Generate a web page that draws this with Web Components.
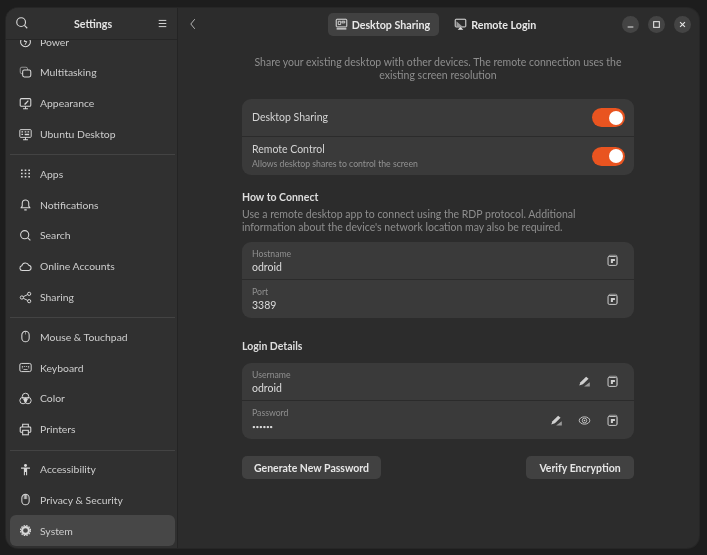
<!DOCTYPE html>
<html>
<head>
<meta charset="utf-8">
<title>Settings</title>
<style>
  html, body { margin: 0; height: 100%; background: #1d1d1d; overflow: hidden; }
  body { font-family: Lato, "Noto Sans", sans-serif; font-size: 10.500px; color: #d6d6d6; }
</style>
</head>
<body>
<settings-window></settings-window>

<script>
// every icon is 16x16 and drawn with currentColor
const ICONS = {
  search: '<circle cx="7" cy="7" r="5" fill="none" stroke="currentColor" stroke-width="1.3"/><path d="M10.8 10.8l3.2 3.2" stroke="currentColor" stroke-width="1.3"/>',
  menu: '<path d="M2.5 3.5h11M2.5 8h11M2.5 12.5h11" stroke="currentColor" stroke-width="1.4"/>',
  back: '<path d="M10 2.5L5.5 8l4.5 5.5" fill="none" stroke="currentColor" stroke-width="1"/>',
  power: '<path d="M5 3.2a6 6 0 1 0 6 0" fill="none" stroke="currentColor" stroke-width="1.3"/><path d="M8.6 3L6.5 8h3l-2 4" fill="none" stroke="currentColor" stroke-width="1.2"/>',
  multitasking: '<rect x="1.5" y="1.5" width="9" height="8" rx="2" fill="none" stroke="currentColor" stroke-width="1" opacity=".7"/><rect x="4.5" y="5" width="10" height="8.5" rx="2" fill="#303030" stroke="currentColor" stroke-width="1.3"/>',
  appearance: '<rect x="1.5" y="2" width="13" height="9.5" rx="1.5" fill="none" stroke="currentColor" stroke-width="1.3"/><path d="M5 14.5h6M8 11.5v3" stroke="currentColor" stroke-width="1.3"/><path d="M6 9l5-5 1 1-4 4.5z" fill="currentColor"/>',
  ubuntu: '<rect x="1" y="2" width="14" height="9.5" rx="1" fill="none" stroke="currentColor" stroke-width="1.2"/><path d="M5 14.5h6M8 11.5v3" stroke="currentColor" stroke-width="1.3"/><path d="M3 4h2v1.5H3zM3 7h2v1.5H3zM7 4h2v1.5H7zM10.500 4h2v1.5h-2zM7 7h5.500v2H7z" fill="currentColor"/>',
  apps: '<path d="M2.500 3h2v2h-2zM7 3h2v2H7zM11.500 3h2v2h-2zM2.500 7h2v2h-2zM7 7h2v2H7zM11.500 7h2v2h-2zM2.500 11h2v2h-2zM7 11h2v2H7zM11.500 11h2v2h-2z" fill="currentColor"/>',
  bell: '<path d="M2.500 12h11l-1.500-2V6.500a4 4 0 0 0-8 0V10z" fill="none" stroke="currentColor" stroke-width="1.3" stroke-linejoin="round"/><path d="M6.500 14.500h3" stroke="currentColor" stroke-width="1.5"/>',
  cloud: '<path d="M4 13a3 3 0 0 1-.6-5.900A4.500 4.500 0 0 1 12 6.500 3.300 3.300 0 0 1 12.200 13z" fill="none" stroke="currentColor" stroke-width="1.3"/>',
  share: '<circle cx="3.500" cy="8" r="2" fill="none" stroke="currentColor" stroke-width="1.2"/><circle cx="12.500" cy="3.500" r="2" fill="none" stroke="currentColor" stroke-width="1.2"/><circle cx="12.500" cy="12.500" r="2" fill="none" stroke="currentColor" stroke-width="1.2"/><path d="M5.300 7l5.400-2.600M5.300 9l5.400 2.600" stroke="currentColor" stroke-width="1.2"/>',
  mouse: '<rect x="3.500" y="1.500" width="9" height="13" rx="4.500" fill="none" stroke="currentColor" stroke-width="1.3"/><path d="M8 1.500v4" stroke="currentColor" stroke-width="1" opacity=".7"/>',
  keyboard: '<rect x="1" y="3" width="14" height="10" rx="2" fill="none" stroke="currentColor" stroke-width="1.2"/><path d="M3.500 6h1.500v1H3.500zM6 6h1.500v1H6zM8.500 6H10v1H8.500zM11 6h1.500v1H11zM3.500 8h1.500v1H3.500zM11 8h1.500v1H11zM5.500 10h5v1h-5z" fill="currentColor"/>',
  color: '<circle cx="8" cy="5.500" r="4" fill="none" stroke="currentColor" stroke-width="1.200"/><circle cx="5" cy="10.500" r="4" fill="none" stroke="currentColor" stroke-width="1.200"/><circle cx="11" cy="10.500" r="4" fill="none" stroke="currentColor" stroke-width="1.200"/><path d="M8 6l2.500 3-1 3h-3l-1-3z" fill="currentColor"/>',
  printer: '<path d="M4.500 5V1.500h7V5" fill="none" stroke="currentColor" stroke-width="1.300"/><path d="M4 11.500H2.500a1 1 0 0 1-1-1V6a1 1 0 0 1 1-1h11a1 1 0 0 1 1 1v4.500a1 1 0 0 1-1 1H12" fill="none" stroke="currentColor" stroke-width="1.300"/><rect x="4.500" y="9" width="7" height="5.500" fill="none" stroke="currentColor" stroke-width="1.300"/>',
  access: '<circle cx="8" cy="3" r="1.800" fill="currentColor"/><path d="M2.500 5.500h11v1.500H10v8H8.700v-4H7.300v4H6V7H2.500z" fill="currentColor"/>',
  privacy: '<rect x="3.500" y="1.500" width="9" height="13" rx="4.500" fill="none" stroke="currentColor" stroke-width="1.300"/><path d="M6.500 2v5.500M8 1.500v6M9.500 2v5.500" stroke="currentColor" stroke-width="1"/>',
  system: '<circle cx="8" cy="8" r="4.200" fill="none" stroke="currentColor" stroke-width="2.600"/><circle cx="8" cy="8" r="6.200" fill="none" stroke="currentColor" stroke-width="1.300" stroke-dasharray="2 1.250"/>',
  desktop: '<rect x="1.500" y="1.500" width="13" height="9.500" rx="1" fill="none" stroke="currentColor" stroke-width="1.200"/><path d="M4 4h3v4H4zM8.500 4H12v2H8.500z" fill="none" stroke="currentColor" stroke-width="1"/><path d="M2 13.500h12" stroke="currentColor" stroke-width="1.500"/>',
  remote: '<rect x="1.500" y="1.500" width="13" height="9.500" rx="1" fill="none" stroke="currentColor" stroke-width="1.200"/><path d="M4.500 14.500h7L8 11z" fill="currentColor"/><path d="M3 4l7 6H3z" fill="currentColor" opacity=".6"/>',
  copy: '<rect x="3.500" y="1.500" width="10" height="12" rx="1.500" fill="none" stroke="currentColor" stroke-width="1" opacity=".7"/><rect x="2.500" y="3" width="11" height="11" rx="1.500" fill="#3a3a3a" stroke="currentColor" stroke-width="1.200"/><path d="M6 6h5v2.500H8.500V11H6z" fill="currentColor"/>',
  edit: '<path d="M1.500 13l1.500-4 7-7 3 2.500-7 7z" fill="currentColor"/><path d="M7.500 14h7V9z" fill="currentColor" opacity=".65"/>',
  eye: '<ellipse cx="8" cy="8" rx="6.500" ry="4.500" fill="none" stroke="currentColor" stroke-width="1.100"/><circle cx="8" cy="8" r="2.800" fill="none" stroke="currentColor" stroke-width="1"/><circle cx="8" cy="8" r="1" fill="currentColor"/>',
  minimize: '<path d="M4.500 11h7" stroke="currentColor" stroke-width="1.300"/>',
  maximize: '<rect x="4.500" y="4.500" width="7" height="7" fill="none" stroke="currentColor" stroke-width="1.300"/>',
  close: '<path d="M5 5l6 6M11 5l-6 6" stroke="currentColor" stroke-width="1.400"/>'
};

class XIcon extends HTMLElement {
  connectedCallback() {
    const size = this.getAttribute('size') || 16;
    this.attachShadow({ mode: 'open' }).innerHTML = `
      <style>
        :host { display: inline-flex; flex: none; width: ${size}px; height: ${size}px; }
        svg { display: block; width: 100%; height: 100%; }
      </style>
      <svg viewBox="0 0 16 16">${ICONS[this.getAttribute('name')] || ''}</svg>`;
  }
}
customElements.define('x-icon', XIcon);

class SideRow extends HTMLElement {
  connectedCallback() {
    const active = this.hasAttribute('active');
    this.attachShadow({ mode: 'open' }).innerHTML = `
      <style>
        :host {
          display: flex; align-items: center; gap: 8px; flex: none;
          height: 30.800px; margin: 0 2px 0 4px; padding: 0 9px;
          border-radius: 6px; color: #cdcdcd; font-size: 10.400px;
          ${active ? 'background: #474747;' : ''}
        }
        x-icon { color: #d8d8d8; }
      </style>
      <x-icon name="${this.getAttribute('icon')}" size="13"></x-icon>
      <span><slot></slot></span>`;
  }
}
customElements.define('side-row', SideRow);

class SideBar extends HTMLElement {
  constructor() {
    super();
    this.shadowDOM = this.attachShadow({ mode: 'open' });
    this.shadowDOM.innerHTML = `
      <style>
        :host {
          display: flex; flex-direction: column; flex: none;
          width: 171px; background: #303030; overflow: hidden;
          border-right: 1px solid #242424;
        }
        header {
          display: flex; align-items: center; justify-content: space-between;
          flex: none; height: 32px; padding: 0 9px 1px 9px; box-sizing: border-box;
          color: #e4e4e4; font-weight: 700; font-size: 10.700px;
          border-bottom: 1px solid #262626; position: relative; z-index: 1; background: #303030;
        }
        .list { flex: 1; min-height: 0; overflow: hidden; padding-bottom: 2px; display: flex; flex-direction: column; justify-content: flex-end; }
        hr { flex: none; border: 0; height: 1px; background: #434343; margin: 5px 2px 3px 4px; }
        header x-icon { color: #d8d8d8; }
      </style>
      <header>
        <x-icon name="search" size="14"></x-icon>
        <span>Settings</span>
        <x-icon name="menu" size="11"></x-icon>
      </header>
      <div class="list">
        <side-row icon="power">Power</side-row>
        <side-row icon="multitasking">Multitasking</side-row>
        <side-row icon="appearance">Appearance</side-row>
        <side-row icon="ubuntu">Ubuntu Desktop</side-row>
        <hr>
        <side-row icon="apps">Apps</side-row>
        <side-row icon="bell">Notifications</side-row>
        <side-row icon="search">Search</side-row>
        <side-row icon="cloud">Online Accounts</side-row>
        <side-row icon="share">Sharing</side-row>
        <hr>
        <side-row icon="mouse">Mouse &amp; Touchpad</side-row>
        <side-row icon="keyboard">Keyboard</side-row>
        <side-row icon="color">Color</side-row>
        <side-row icon="printer">Printers</side-row>
        <hr>
        <side-row icon="access">Accessibility</side-row>
        <side-row icon="privacy">Privacy &amp; Security</side-row>
        <side-row icon="system" active>System</side-row>
      </div>`;
  }
}
customElements.define('side-bar', SideBar);

class ViewTab extends HTMLElement {
  connectedCallback() {
    const active = this.hasAttribute('active');
    this.attachShadow({ mode: 'open' }).innerHTML = `
      <style>
        :host {
          display: flex; align-items: center; gap: 4px;
          height: 23px; padding: 0 9px 0 7px; border-radius: 5px;
          font-weight: 700; font-size: 10.700px; color: #e8e8e8;
          ${active ? 'background: #414141;' : ''}
        }
      </style>
      <x-icon name="${this.getAttribute('icon')}" size="13"></x-icon>
      <span><slot></slot></span>`;
  }
}
customElements.define('view-tab', ViewTab);

class WinButton extends HTMLElement {
  connectedCallback() {
    this.attachShadow({ mode: 'open' }).innerHTML = `
      <style>
        :host {
          display: flex; align-items: center; justify-content: center;
          width: 17px; height: 17px; border-radius: 50%; background: #444444; color: #e6e6e6;
        }
      </style>
      <x-icon name="${this.getAttribute('icon')}" size="13"></x-icon>`;
  }
}
customElements.define('win-button', WinButton);

class TopBar extends HTMLElement {
  constructor() {
    super();
    this.attachShadow({ mode: 'open' }).innerHTML = `
      <style>
        :host {
          display: grid; grid-template-columns: 1fr auto 1fr; align-items: center;
          flex: none; height: 37px; padding: 0 7px 5px 8px; box-sizing: border-box;
        }
        .back { color: #c6c6c6; }
        .tabs { display: flex; gap: 8px; margin-left: -4px; }
        .ctl { display: flex; justify-content: flex-end; gap: 9px; }
      </style>
      <x-icon class="back" name="back" size="14"></x-icon>
      <div class="tabs">
        <view-tab icon="desktop" active>Desktop Sharing</view-tab>
        <view-tab icon="remote">Remote Login</view-tab>
      </div>
      <div class="ctl">
        <win-button icon="minimize"></win-button>
        <win-button icon="maximize"></win-button>
        <win-button icon="close"></win-button>
      </div>`;
  }
}
customElements.define('top-bar', TopBar);

class ToggleSwitch extends HTMLElement {
  constructor() {
    super();
    this.attachShadow({ mode: 'open' }).innerHTML = `
      <style>
        :host {
          display: flex; align-items: center; justify-content: flex-end; flex: none;
          width: 33px; height: 19px; padding: 0 2px; box-sizing: border-box;
          border-radius: 10px; background: #e95420;
        }
        i { display: block; width: 14px; height: 14px; border-radius: 50%; background: #fff; }
      </style>
      <i></i>`;
  }
}
customElements.define('toggle-switch', ToggleSwitch);

class ListCard extends HTMLElement {
  constructor() {
    super();
    this.attachShadow({ mode: 'open' }).innerHTML = `
      <style>
        :host { display: block; background: #3a3a3a; border-radius: 9px; overflow: hidden; }
        ::slotted(*:not(:last-child)) { border-bottom: 1px solid #2b2b2b; }
      </style>
      <slot></slot>`;
  }
}
customElements.define('list-card', ListCard);

// one line of a card: title (optionally over a value or subtitle) and trailing controls
class CardRow extends HTMLElement {
  connectedCallback() {
    const label = this.getAttribute('label');
    const value = this.getAttribute('value');
    const title = this.getAttribute('title-text');
    const sub = this.getAttribute('sub');
    const icons = (this.getAttribute('icons') || '').split(' ').filter(Boolean);
    this.attachShadow({ mode: 'open' }).innerHTML = `
      <style>
        :host {
          display: flex; align-items: center; justify-content: space-between;
          height: 38px; padding: 0 9px 0 10px; box-sizing: border-box;
        }
        .text { display: flex; flex-direction: column; }
        .text.subbed { padding-bottom: 1px; }
        .label { font-size: 8.700px; line-height: 11px; color: #8f8f8f; margin-bottom: 2px; }
        .value { font-size: 10.500px; line-height: 13px; color: #dcdcdc; }
        .value.dots { font-size: 6.500px; letter-spacing: -.3px; }
        .title { font-size: 10.500px; line-height: 13px; color: #d4d4d4; }
        .sub { font-size: 8.700px; line-height: 11px; color: #929292; margin-top: 2px; }
        .end { display: flex; align-items: center; gap: 15px; color: #d0d0d0; padding-right: 6px; }
        ::slotted(toggle-switch) { margin-right: -6px; }
      </style>
      <div class="text ${sub ? 'subbed' : ''}">
        ${label ? `<span class="label">${label}</span>` : ''}
        ${value ? `<span class="value ${value.startsWith('•') ? 'dots' : ''}">${value}</span>` : ''}
        ${title ? `<span class="title">${title}</span>` : ''}
        ${sub ? `<span class="sub">${sub}</span>` : ''}
      </div>
      <div class="end">
        ${icons.map(n => `<x-icon name="${n}" size="13"></x-icon>`).join('')}
        <slot></slot>
      </div>`;
  }
}
customElements.define('card-row', CardRow);

class PillButton extends HTMLElement {
  constructor() {
    super();
    this.attachShadow({ mode: 'open' }).innerHTML = `
      <style>
        :host {
          display: flex; align-items: center; justify-content: center;
          height: 23px; min-width: 84px; padding: 0 12px; border-radius: 5px;
          background: #414141; color: #e6e6e6; font-weight: 700; font-size: 10.500px;
        }
      </style>
      <slot></slot>`;
  }
}
customElements.define('pill-button', PillButton);

class SharingPage extends HTMLElement {
  constructor() {
    super();
    this.attachShadow({ mode: 'open' }).innerHTML = `
      <style>
        :host { display: block; width: 392px; margin: 0 auto; padding-top: 11px; }
        p { margin: 0; font-size: 10.500px; line-height: 13px; color: #8e8e8e; }
        .intro { text-align: center; margin-bottom: 17px; }
        h3 { margin: 0; font-size: 10.500px; line-height: 14px; font-weight: 700; color: #dedede; }
        .how { margin-top: 15px; }
        .how p { margin: 4px 0 8px; }
        .login { margin-top: 21px; }
        .login h3 { margin-bottom: 10px; }
        .actions { display: flex; justify-content: space-between; margin-top: 17px; }
      </style>
      <p class="intro">Share your existing desktop with other devices. The remote connection uses the<br>existing screen resolution</p>
      <list-card>
        <card-row title-text="Desktop Sharing"><toggle-switch></toggle-switch></card-row>
        <card-row title-text="Remote Control" sub="Allows desktop shares to control the screen"><toggle-switch></toggle-switch></card-row>
      </list-card>
      <div class="how">
        <h3>How to Connect</h3>
        <p>Use a remote desktop app to connect using the RDP protocol. Additional<br>information about the device's network location may also be required.</p>
        <list-card>
          <card-row label="Hostname" value="odroid" icons="copy"></card-row>
          <card-row label="Port" value="3389" icons="copy"></card-row>
        </list-card>
      </div>
      <div class="login">
        <h3>Login Details</h3>
        <list-card>
          <card-row label="Username" value="odroid" icons="edit copy"></card-row>
          <card-row label="Password" value="••••••" icons="edit eye copy"></card-row>
        </list-card>
      </div>
      <div class="actions">
        <pill-button>Generate New Password</pill-button>
        <pill-button>Verify Encryption</pill-button>
      </div>`;
  }
}
customElements.define('sharing-page', SharingPage);

class SettingsWindow extends HTMLElement {
  constructor() {
    super();
    this.attachShadow({ mode: 'open' }).innerHTML = `
      <style>
        :host {
          display: flex; width: 693px; height: 540px; margin: 8px 0 0 6px;
          border-radius: 12px; overflow: hidden; background: #2c2c2c;
          box-shadow: 0 0 0 1px #262626; filter: blur(.3px);
        }
        main { flex: 1; min-width: 0; display: flex; flex-direction: column; padding-right: 1px; }
      </style>
      <side-bar></side-bar>
      <main>
        <top-bar></top-bar>
        <sharing-page></sharing-page>
      </main>`;
  }
}
customElements.define('settings-window', SettingsWindow);
</script>
</body>
</html>
